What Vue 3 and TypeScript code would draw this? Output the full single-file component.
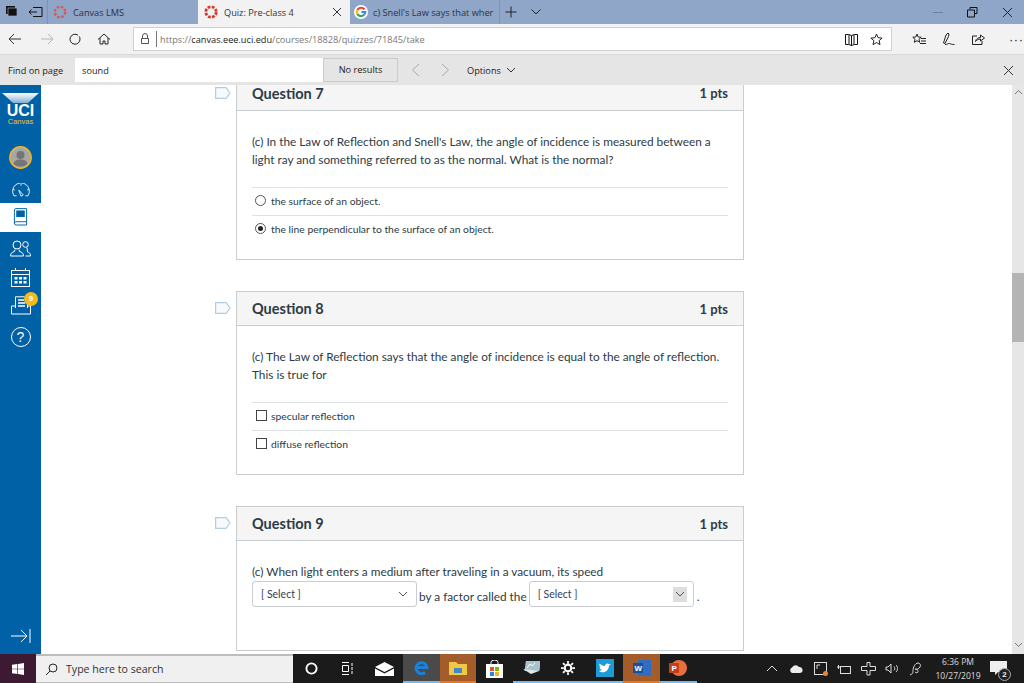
<script setup lang="ts">
interface Opt { text: string; checked?: boolean }
const q7: Opt[] = [{ text: 'the surface of an object.' }, { text: 'the line perpendicular to the surface of an object.', checked: true }]
const q8: Opt[] = [{ text: 'specular reflection' }, { text: 'diffuse reflection' }]
</script>

<template>
  <div class="screen">
    <div class="tabs">
      <div class="tabtools">
        <svg width="20" height="14" viewBox="0 0 20 14"><rect x="5" y="1" width="9" height="8" fill="#111"/><rect x="7" y="3" width="9" height="8" fill="#111" stroke="#8fa6c9" stroke-width=".7"/></svg>
        <svg width="16" height="14" viewBox="0 0 16 14" fill="none" stroke="#111"><path d="M5 2.500h9v9H5M1 7h8M3.500 4.500L1 7l2.500 2.500"/></svg>
      </div>
      <div class="tab t1"><svg class="cv" viewBox="0 0 14 14"><circle cx="7" cy="7" r="5.200" fill="none" stroke="#d65a52" stroke-width="2.400" stroke-dasharray="2.600 1.500"/></svg><span>Canvas LMS</span></div>
      <div class="tab t2"><svg class="cv" viewBox="0 0 14 14"><circle cx="7" cy="7" r="5.200" fill="none" stroke="#d8392e" stroke-width="2.800" stroke-dasharray="2.800 1.300"/></svg><span>Quiz: Pre-class 4</span><svg class="x" width="12" height="12" viewBox="0 0 12 12" stroke="#333" fill="none"><path d="M2 2l8 8M10 2l-8 8"/></svg></div>
      <div class="tab t3"><svg class="cv" viewBox="0 0 14 14" fill="none" stroke-width="2.200"><circle cx="7" cy="7" r="7" fill="#fff" stroke="none"/><path d="M10.500 4.400A4.300 4.300 0 0 0 3.400 4.900" stroke="#e94235"/><path d="M3.400 4.900a4.300 4.300 0 0 0 0 4.200" stroke="#fbbc05"/><path d="M3.400 9.100a4.300 4.300 0 0 0 7 .3" stroke="#34a853"/><path d="M10.400 9.400A4.300 4.300 0 0 0 11.300 7H7.400" stroke="#4285f4"/></svg><span>c) Snell's Law says that wher</span></div>
      <svg class="plus" width="16" height="16" viewBox="0 0 16 16" stroke="#222" fill="none"><path d="M8 2.500v11M2.500 8h11"/></svg>
      <svg class="chev" width="12" height="10" viewBox="0 0 12 10" stroke="#222" fill="none"><path d="M1.500 2.500L6 7l4.500-4.500"/></svg>
      <div class="winctl">
        <span class="min"></span>
        <svg width="11" height="11" viewBox="0 0 11 11" fill="none" stroke="#111"><path d="M3 2.500V.5h7v6H8M.5 3h7v7h-7z"/></svg>
        <svg width="11" height="11" viewBox="0 0 11 11" fill="none" stroke="#222"><path d="M1 1l9 9M10 1l-9 9"/></svg>
      </div>
    </div>

    <div class="addr">
      <svg class="b1" width="14" height="12" viewBox="0 0 14 12" fill="none" stroke="#333"><path d="M13 6H1M6 1L1 6l5 5"/></svg>
      <svg class="b2" width="14" height="12" viewBox="0 0 14 12" fill="none" stroke="#b5b5b5"><path d="M1 6h12M8 1l5 5-5 5"/></svg>
      <svg class="b3" width="12" height="12" viewBox="0 0 12 12" fill="none" stroke="#222"><path d="M9 2.200A5 5 0 1 0 11 6a5 5 0 0 0-.8-2.600"/></svg>
      <svg class="b4" width="14" height="12" viewBox="0 0 14 12" fill="none" stroke="#222"><path d="M1 6.500L7 1l6 5.500M3 5v6h3V8h2v3h3V5"/></svg>
      <div class="urlbox">
        <svg width="10" height="12" viewBox="0 0 10 12" fill="none" stroke="#555"><path d="M2.500 5V3a2.500 2.500 0 0 1 5 0v2M1.500 5.500h7v5h-7z"/></svg>
        <span class="sep"></span>
        <span class="url">https://<b>canvas.eee.uci.edu</b>/courses/18828/quizzes/71845/take</span>
        <svg class="book" width="13" height="13" viewBox="0 0 13 13" fill="none" stroke="#111"><path d="M.5 11.500V1.500h3l3 1 3-1h3v10h-3l-3 1-3-1zM4 1.500v10M6.500 2.500v10M9 1.500v10"/></svg>
        <svg class="star" width="13" height="13" viewBox="0 0 13 13" fill="none" stroke="#222"><path d="M6.500 1l1.600 3.700 4 .4-3 2.600.9 3.900-3.500-2-3.500 2 .9-3.900-3-2.600 4-.4z"/></svg>
      </div>
      <div class="addr-right">
        <svg width="14" height="13" viewBox="0 0 14 13" fill="none" stroke="#222"><path d="M5 1l1.200 3 3 .2L7 6.300l.7 3L5 7.700 2.300 9.300l.7-3L.8 4.200l3-.2zM9 5.500h5M9 8h5M8 10.500h6"/></svg>
        <svg width="14" height="14" viewBox="0 0 14 14" fill="none" stroke="#222"><path d="M1.500 11L4 3l2-2 1 1-.5 2.500L3 11.500zM3 12.500c3 0 3-1.500 4.500-1 1 .4 2 1 5 1"/></svg>
        <svg width="13" height="13" viewBox="0 0 13 13" fill="none" stroke="#222"><path d="M5 3H.5v8.500H10V8M3.500 8.500C4 5.500 6.500 4.500 8.500 4.500V2L12.500 5 8.500 8V6C6.500 6 4.500 7 3.500 8.500z"/></svg>
        <span class="dots">···</span>
      </div>
    </div>

    <div class="find">
      <span class="find-label">Find on page</span>
      <div class="find-input"><span>sound</span><em>No results</em></div>
      <svg class="f1" width="9" height="14" viewBox="0 0 9 14" fill="none" stroke="#aaa"><path d="M8 1L1.500 7 8 13"/></svg>
      <svg class="f2" width="9" height="14" viewBox="0 0 9 14" fill="none" stroke="#aaa"><path d="M1 1l6.500 6L1 13"/></svg>
      <span class="opts">Options</span>
      <svg class="f3" width="10" height="7" viewBox="0 0 10 7" fill="none" stroke="#333"><path d="M1 1l4 4 4-4"/></svg>
      <svg class="f4" width="11" height="11" viewBox="0 0 11 11" fill="none" stroke="#333"><path d="M1 1l9 9M10 1l-9 9"/></svg>
    </div>

    <div class="page">
      <nav class="side">
        <div class="logo">
          <div class="glow"></div>
          <strong>UCI</strong>
          <small>Canvas</small>
        </div>
        <div class="item avatar"><svg width="23" height="23" viewBox="0 0 23 23"><circle cx="11.500" cy="11.500" r="10.700" fill="#a7a7a7" stroke="#f2b81c" stroke-width="1.400"/><circle cx="11.500" cy="9" r="4" fill="#757575"/><path d="M4.500 18c1-4 4-4.500 7-4.500s6 .5 7 4.500a10 10 0 0 1-14 0z" fill="#757575"/></svg></div>
        <div class="item dash"><svg width="20" height="15" viewBox="0 0 22 17" fill="none" stroke="#fff"><path d="M6 14.500H3A9.500 9.500 0 1 1 19 14.500h-3M11 3V1M4 8l-2-1M18 8l2-1"/><path d="M8.500 8l5 5.500-2.500 1.500z"/></svg></div>
        <div class="item active"><svg width="15" height="19" viewBox="0 0 16 20" fill="none" stroke="#0061a6"><path d="M1.500 16.500V2a1.500 1.500 0 0 1 1.500-1.500h11.500v14H3a1.500 1.500 0 0 0-1.500 1.500 2 2 0 0 0 2 2h11v-3.500"/><rect x="4" y="3" width="8" height="6" fill="#0061a6"/></svg></div>
        <div class="item people"><svg width="21" height="17" viewBox="0 0 21 17" fill="none" stroke="#fff"><circle cx="7" cy="5" r="4"/><path d="M5 9.500l-.5 2c-2 .5-4 1.500-4 4.500h13c0-3-2-4-4-4.500L9 9.500"/><circle cx="15.500" cy="4.500" r="2.800"/><path d="M15.500 16h5c0-3-1.500-3.500-3-4l-.5-4.500"/></svg></div>
        <div class="item cal"><svg width="19" height="19" viewBox="0 0 19 19" fill="none" stroke="#fff"><rect x=".5" y="2.500" width="18" height="16" /><path d="M.5 6.500h18M4.500 0v3M14.500 0v3" /><path d="M3.500 9h3v2.500h-3zM8 9h3v2.500H8zM12.500 9h3v2.500h-3zM3.500 13h3v2.500h-3zM8 13h3v2.500H8zM12.500 13h3v2.500h-3z" fill="#fff" stroke="none"/></svg></div>
        <div class="item inbox"><svg width="20" height="19" viewBox="0 0 20 19" fill="none" stroke="#fff"><path d="M4.500 12V.8h9l3 3V12M.5 10v8h19v-8h-3M.5 10h4"/><path d="M7 4h6M7 7h7M7 10h7" stroke-width="1.400"/></svg><span class="badge">9</span></div>
        <div class="item helpi"><span class="help">?</span></div>
        <div class="grow"></div>
        <div class="collapse"><svg width="20" height="14" viewBox="0 0 20 14" fill="none" stroke="#fff"><path d="M0 7h16M10 1l6 6-6 6M19 0v14"/></svg></div>
      </nav>

      <main class="content">
        <section class="qrow first">
          <svg class="flag" width="16" height="12" viewBox="0 0 16 12" fill="#f6fafd" stroke="#b6ccde" stroke-width="1.200"><path d="M.6.600h10.500l3.900 5.400-3.900 5.400H.6z"/></svg>
          <div class="card c7">
            <header class="qh"><h3>Question 7</h3><span>1 pts</span></header>
            <div class="qb">
              <p>(c) In the Law of Reflection and Snell's Law, the angle of incidence is measured between a<br>light ray and something referred to as the normal. What is the normal?</p>
              <ul>
                <li v-for="o in q7" :key="o.text"><span class="radio" :class="{ on: o.checked }"></span>{{ o.text }}</li>
              </ul>
            </div>
          </div>
        </section>

        <section class="qrow">
          <svg class="flag" width="16" height="12" viewBox="0 0 16 12" fill="#f6fafd" stroke="#b6ccde" stroke-width="1.200"><path d="M.6.600h10.500l3.900 5.400-3.900 5.400H.6z"/></svg>
          <div class="card c8">
            <header class="qh"><h3>Question 8</h3><span>1 pts</span></header>
            <div class="qb">
              <p>(c) The Law of Reflection says that the angle of incidence is equal to the angle of reflection.<br>This is true for</p>
              <ul>
                <li v-for="o in q8" :key="o.text"><span class="box"></span>{{ o.text }}</li>
              </ul>
            </div>
          </div>
        </section>

        <section class="qrow">
          <svg class="flag" width="16" height="12" viewBox="0 0 16 12" fill="#f6fafd" stroke="#b6ccde" stroke-width="1.200"><path d="M.6.600h10.500l3.900 5.400-3.900 5.400H.6z"/></svg>
          <div class="card c9">
            <header class="qh"><h3>Question 9</h3><span>1 pts</span></header>
            <div class="qb">
              <p>(c) When light enters a medium after traveling in a vacuum, its speed</p>
              <div class="fill">
                <div class="sel s1">[ Select ]<svg width="10" height="6" viewBox="0 0 10 6" fill="none" stroke="#555"><path d="M1 1l4 4 4-4"/></svg></div>
                <span class="by">by a factor called the</span>
                <div class="sel s2">[ Select ]<i><svg width="10" height="6" viewBox="0 0 10 6" fill="none" stroke="#555"><path d="M1 1l4 4 4-4"/></svg></i></div>
                <span class="dot">.</span>
              </div>
            </div>
          </div>
        </section>
      </main>

      <aside class="scroll">
        <svg width="9" height="6" viewBox="0 0 9 6" fill="none" stroke="#777"><path d="M1 5l3.500-3.500L8 5"/></svg>
        <div class="thumb"></div>
        <svg class="down" width="9" height="6" viewBox="0 0 9 6" fill="none" stroke="#777"><path d="M1 1l3.500 3.500L8 1"/></svg>
      </aside>
    </div>

    <footer class="taskbar">
      <div class="start"><svg width="12" height="12" viewBox="0 0 13 13" fill="#fff"><path d="M0 2l5.800-.9v5H0zM6.500 1l6.500-1v6.100H6.500zM0 6.900h5.800v5L0 11zM6.500 6.900H13V13l-6.500-1z"/></svg></div>
      <div class="search"><svg width="13" height="13" viewBox="0 0 13 13" fill="none" stroke="#222"><circle cx="8" cy="5" r="4"/><path d="M5 8l-4 4"/></svg><span>Type here to search</span></div>
      <div class="tb-icons">
        <div class="ti"><svg width="13" height="13" viewBox="0 0 14 14" fill="none" stroke="#fff" stroke-width="2"><circle cx="7" cy="7" r="5.500"/></svg></div>
        <div class="ti"><svg width="14" height="13" viewBox="0 0 14 13" fill="none" stroke="#fff"><path d="M1 .5h7M1 12.500h7M1.500 3.500h6v6h-6zM11 1v3M11 5v3M11 9v3"/></svg></div>
        <div class="ti"><svg width="19" height="14" viewBox="0 0 19 14" fill="#fff"><path d="M0 5l9.500-5L19 5l-9.500 5zM0 6.500l9.500 5 9.500-5V14H0z"/></svg></div>
        <div class="ti edge ul"><svg width="15" height="15" viewBox="0 0 15 15" fill="none" stroke="#1c7fd8" stroke-width="3"><path d="M2 7.500h11A5.500 5.500 0 1 0 11 12.500"/></svg></div>
        <div class="ti or"><svg width="18" height="14" viewBox="0 0 18 14"><path d="M0 1h7l2 2h9v11H0z" fill="#f2c744"/><rect x="5" y="7" width="8" height="5" fill="#3f87c7"/></svg></div>
        <div class="ti"><svg width="17" height="18" viewBox="0 0 17 18"><path d="M5 5V2.500a3.500 2.500 0 0 1 7 0V5" fill="none" stroke="#fff"/><rect y="4" width="17" height="14" fill="#fff"/><rect x="4" y="7" width="4" height="4" fill="#e6532d"/><rect x="9" y="7" width="4" height="4" fill="#7fba00"/><rect x="4" y="12" width="4" height="4" fill="#1c8ae0"/><rect x="9" y="12" width="4" height="4" fill="#f2b81c"/></svg></div>
        <div class="ti ul"><svg width="18" height="15" viewBox="0 0 18 15"><rect x="2" y="1" width="15" height="10" fill="#a9c3cd" transform="skewX(-8) translate(2 0)"/><path d="M1 9l8 5 8-3" fill="#dfe7e9"/><path d="M5 8l3-4 2 2 3-3" stroke="#fff" fill="none"/></svg></div>
        <div class="ti ul"><svg width="14" height="14" viewBox="0 0 16 16" fill="none" stroke="#fff" stroke-width="2.500"><circle cx="8" cy="8" r="3.800"/><path d="M8 0v3M8 13v3M0 8h3M13 8h3M2.300 2.300l2 2M11.700 11.700l2 2M13.700 2.300l-2 2M4.300 11.700l-2 2" stroke-width="2"/></svg></div>
        <div class="ti ul"><svg width="18" height="18" viewBox="0 0 18 18"><rect width="18" height="18" fill="#1d9bd9"/><path d="M3 12c2 1.600 6 2 8-.5 1.500-1.700 2-3.500 2-5l2-1.500-2 .3c-1-1.500-4-1-4 1.700C7 7 5 6 3.500 4.500 3 6 3.500 7.500 5 8.500L3.500 8.200c.2 1.400 1.200 2.300 2.500 2.600-.7.700-1.800.9-3 1.200z" fill="#fff"/></svg></div>
        <div class="ti or ul2"><svg width="18" height="16" viewBox="0 0 18 16"><rect x="5" y="0" width="13" height="16" rx="1" fill="#2f6dc4"/><rect x="0" y="3" width="10" height="10" fill="#1c4e9c"/><text x="1.500" y="11" font-size="8" font-weight="700" fill="#fff" font-family="Liberation Sans, sans-serif">W</text></svg></div>
        <div class="ti ul"><svg width="18" height="18" viewBox="0 0 18 18"><circle cx="10" cy="9" r="8" fill="#e8703f"/><rect x="0" y="4" width="10" height="10" fill="#c43e1c"/><text x="2.500" y="12" font-size="8" font-weight="700" fill="#fff" font-family="Liberation Sans, sans-serif">P</text></svg></div>
      </div>
      <div class="tray">
        <span class="cell"><svg width="12" height="7" viewBox="0 0 12 7" fill="none" stroke="#ddd"><path d="M1 6l5-5 5 5"/></svg></span>
        <span class="cell"><svg width="14" height="9" viewBox="0 0 14 9" fill="#ececec"><path d="M3 9a3 3 0 0 1 0-5.500A4 4 0 0 1 10 3a3 3 0 0 1 1 6z"/></svg></span>
        <span class="cell ink"><svg width="13" height="13" viewBox="0 0 13 13" fill="none" stroke="#ddd"><rect x=".5" y=".5" width="12" height="12"/><path d="M3 7V3h3"/></svg><i></i></span>
        <span class="cell"><svg width="14" height="10" viewBox="0 0 14 10" fill="none" stroke="#ddd"><rect x="3.500" y="2.500" width="10" height="7"/><path d="M0 3h3M1.500 1v4"/></svg></span>
        <span class="cell"><svg width="15" height="14" viewBox="0 0 15 14" fill="none" stroke="#ddd"><path d="M6 .5h3v4h5.500v4H9V13H6V8.500H.5v-4H6z"/></svg></span>
        <span class="cell"><svg width="14" height="11" viewBox="0 0 14 11" fill="none" stroke="#ddd"><path d="M1 4v3h2l3 3V1L3 4zM9 3.500c1 1 1 3 0 4M11 2c2 2 2 5 0 7"/></svg></span>
        <span class="cell"><svg width="14" height="15" viewBox="0 0 14 15" fill="none" stroke="#ddd"><path d="M1 14c3-1 3-3 3-5s2-7 5-7c2 0 3 2 2 4S7 9 6 8c2 0 3 1 3 2.500S7 12 6 11"/></svg></span>
        <div class="clock"><span>6:36 PM</span><span>10/27/2019</span></div>
        <div class="note"><svg width="17" height="15" viewBox="0 0 17 15" fill="#eee"><path d="M0 0h17v11H8l-3 3v-3H0z"/></svg><i>2</i></div>
      </div>
    </footer>
  </div>
</template>

<style>
html, body { margin: 0; background: #fff; overflow: hidden; }
</style>

<style scoped>
.screen { width: 1024px; height: 683px; display: flex; flex-direction: column; overflow: hidden; font-family: Lato, "Liberation Sans", sans-serif; color: #2d3b45; }
svg { display: block; flex: none; }

.tabs { height: 24px; flex: none; background: #8fa6c9; display: flex; align-items: center; font-family: "Open Sans", sans-serif; font-size: 9.200px; color: #2a3345; }
.tabtools { width: 48px; height: 24px; display: flex; align-items: center; gap: 7px; padding-left: 1px; box-sizing: border-box; border-right: 1px solid #7d93b6; }
.tab { height: 24px; display: flex; align-items: center; box-sizing: border-box; }
.t1 { width: 150px; padding-left: 5px; gap: 6px; }
.t2 { width: 152px; padding-left: 6px; gap: 6px; background: #f2f2f2; color: #333; }
.t2 .x { margin-left: auto; margin-right: 7px; }
.t3 { width: 150px; padding-left: 4px; gap: 5px; border-right: 1px solid #7d93b6; white-space: nowrap; }
.cv { width: 14px; height: 14px; }
.plus { margin-left: 3px; }
.chev { margin-left: 11px; }
.winctl { margin-left: auto; display: flex; align-items: center; gap: 24px; padding-right: 11px; }
.min { width: 10px; height: 1px; background: #6f7f99; }

.addr { height: 30px; flex: none; background: #f2f2f2; display: flex; align-items: center; box-sizing: border-box; }
.b1 { margin-left: 8px; }
.b2 { margin-left: 18px; }
.b3 { margin-left: 15px; }
.b4 { margin-left: 16px; }
.urlbox { margin-left: 22px; width: 759px; height: 24px; background: #fff; border: 1px solid #cfcfcf; box-sizing: border-box; display: flex; align-items: center; padding-left: 6px; font-family: "Open Sans", sans-serif; font-size: 9.200px; color: #777; }
.sep { width: 1px; height: 16px; background: #777; margin: 0 3px 0 6px; }
.url b { font-weight: 400; color: #222; }
.book { margin-left: auto; }
.star { margin-left: 12px; margin-right: 8px; }
.addr-right { display: flex; align-items: center; margin-left: 20px; gap: 16px; }
.dots { font-size: 13px; color: #222; letter-spacing: .5px; margin-left: 8px; font-family: "Liberation Sans", sans-serif; }

.find { height: 31px; flex: none; background: #e5e5e5; display: flex; align-items: center; font-family: "Open Sans", sans-serif; font-size: 9.200px; color: #222; border-top: 1px solid #dadada; box-sizing: border-box; }
.find-label { margin-left: 8px; width: 67px; flex: none; }
.find-input { width: 323px; height: 24px; background: #fff; box-sizing: border-box; display: flex; align-items: center; padding-left: 7px; flex: none; }
.find-input span { flex: 1; }
.find-input em { font-style: normal; width: 75px; height: 24px; line-height: 22px; text-align: center; background: #e5e5e5; border: 1px solid #cacaca; box-sizing: border-box; }
.f1 { margin-left: 13px; }
.f2 { margin-left: 21px; }
.opts { margin-left: 17px; }
.f3 { margin-left: 5px; }
.f4 { margin-left: auto; margin-right: 10px; }

.page { flex: 1; min-height: 0; display: flex; }
.side { width: 41px; background: #0061a6; display: flex; flex-direction: column; align-items: stretch; flex: none; }
.logo { height: 55px; box-sizing: border-box; text-align: center; padding-top: 8px; }
.glow { height: 10px; margin-bottom: 1px; background: linear-gradient(#fff, #7fb0d3); clip-path: polygon(5% 0, 95% 0, 68% 100%, 32% 100%); }
.logo strong { display: block; color: #fff; font: 800 16px/13px "Liberation Sans", sans-serif; }
.logo small { display: block; color: #f2c230; font: 400 7.500px/7px "Liberation Sans", sans-serif; margin-top: 1px; }
.item { display: flex; align-items: center; justify-content: center; position: relative; box-sizing: border-box; color: #fff; }
.avatar { height: 34px; }
.dash { height: 29px; padding-top: 4px; }
.active { background: #fff; height: 29px; }
.people { height: 32px; }
.cal { height: 27px; }
.inbox { height: 29px; }
.helpi { height: 34px; }
.badge { position: absolute; left: 24px; top: 1px; width: 14px; height: 14px; border-radius: 50%; background: #f2bb1c; color: #fff; font: 700 8px/14px "Liberation Sans", sans-serif; text-align: center; }
.help { width: 18px; height: 18px; border: 1px solid #fff; border-radius: 50%; text-align: center; font: 400 14px/18px "Liberation Sans", sans-serif; }
.grow { flex: 1; }
.collapse { height: 36px; display: flex; align-items: center; justify-content: center; }

.content { width: 971px; flex: none; overflow: hidden; box-sizing: border-box; padding-left: 174px; display: flex; flex-direction: column; gap: 31px; }
.qrow { width: 529px; position: relative; padding-left: 21px; box-sizing: border-box; flex: none; }
.flag { position: absolute; left: 0; top: 11px; }
.first .flag { top: 2px; }
.card { width: 508px; border: 1px solid #c7cdd1; box-sizing: border-box; background: #fff; }
.qh { height: 33px; background: #f5f5f5; border-bottom: 1px solid #c7cdd1; display: flex; justify-content: space-between; align-items: center; padding: 0 15px; box-sizing: content-box; }
.qh h3 { margin: 0; font: 700 14.5px Lato, sans-serif; color: #2d3b45; }
.qh span { font: 700 13px Lato, sans-serif; color: #2d3b45; }
.c7 { border-top: 0; height: 175px; }
.c7 .qh { height: 25px; align-items: flex-start; }
.c8 { height: 184px; }
.c9 { height: 145px; }
.qb { padding: 22px 15px 0; }
.qb p { margin: 0; font: 400 11.800px/18px Lato, sans-serif; color: #2d3b45; }
ul { list-style: none; margin: 18px 0 0; padding: 0; }
li { height: 25px; padding-bottom: 2px; border-top: 1px solid #dfe2e4; display: flex; align-items: center; font: 400 10.350px Lato, sans-serif; color: #2d3b45; box-sizing: content-box; }
.radio { width: 9px; height: 9px; border: 1px solid #555; border-radius: 50%; margin: 0 5px 0 3px; box-sizing: content-box; position: relative; flex: none; }
.radio.on::after { content: ""; position: absolute; inset: 2px; background: #222; border-radius: 50%; }
.box { width: 9px; height: 9px; border: 1px solid #444; margin: 0 4px 0 4px; flex: none; }
.fill { display: flex; align-items: center; font: 400 11.800px Lato, sans-serif; }
.sel { height: 26px; border: 1px solid #c7cdd1; border-radius: 3px; box-sizing: border-box; display: flex; align-items: center; justify-content: space-between; padding: 0 8px; font-size: 10.500px; color: #34415a; background: #fff; }
.s1 { width: 165px; }
.s2 { width: 165px; margin-left: 2px; padding-right: 6px; }
.s2 i { width: 14px; height: 15px; background: #dedede; display: flex; align-items: center; justify-content: center; }
.by { margin-left: 2px; padding-top: 4px; }
.dot { margin-left: 3px; padding-top: 4px; }

.scroll { flex: 1; background: #e6e6e6; position: relative; display: flex; flex-direction: column; align-items: center; padding-top: 4px; box-sizing: border-box; }
.thumb { position: absolute; right: 0; top: 188px; width: 12px; height: 69px; background: #b4b4b4; }
.down { margin-top: auto; margin-bottom: 6px; }

.taskbar { height: 29px; flex: none; background: #1b1b1b; display: flex; align-items: stretch; color: #eee; }
.start { width: 36px; background: #3c1a33; display: flex; align-items: center; justify-content: center; }
.search { width: 257px; background: #f0f0f0; display: flex; align-items: center; gap: 8px; padding-left: 9px; box-sizing: border-box; color: #333; font: 400 10.600px "Open Sans", sans-serif; border-top: 2px solid #bdbdbd; border-bottom: 1px solid #bdbdbd; }
.tb-icons { display: flex; }
.ti { width: 36.700px; height: 29px; display: flex; align-items: center; justify-content: center; box-sizing: border-box; }
.edge { background: #4a4a4a; }
.or { background: #a35c2a; border-bottom: 2px solid #e87a24; }
.ul { border-bottom: 2px solid #76b9ed; }
.ul2 { border-bottom-color: #e87a24; }
.tray { margin-left: auto; display: flex; align-items: center; padding-right: 15px; }
.cell { width: 24px; display: flex; justify-content: center; flex: none; }
.ink { position: relative; }
.ink i { position: absolute; right: 4px; bottom: -1px; width: 5px; height: 5px; border-radius: 50%; background: #e8862a; }
.clock { display: flex; flex-direction: column; align-items: center; font: 400 8.500px/14px "Open Sans", sans-serif; color: #ddd; margin-left: 6px; width: 48px; }
.note { position: relative; width: 22px; margin-left: 5px; display: flex; justify-content: center; }
.note i { position: absolute; right: -2px; bottom: -5px; width: 11px; height: 11px; border-radius: 50%; background: #222; border: 1px solid #aaa; font: 700 8px/11px "Liberation Sans", sans-serif; text-align: center; color: #eee; }
</style>
